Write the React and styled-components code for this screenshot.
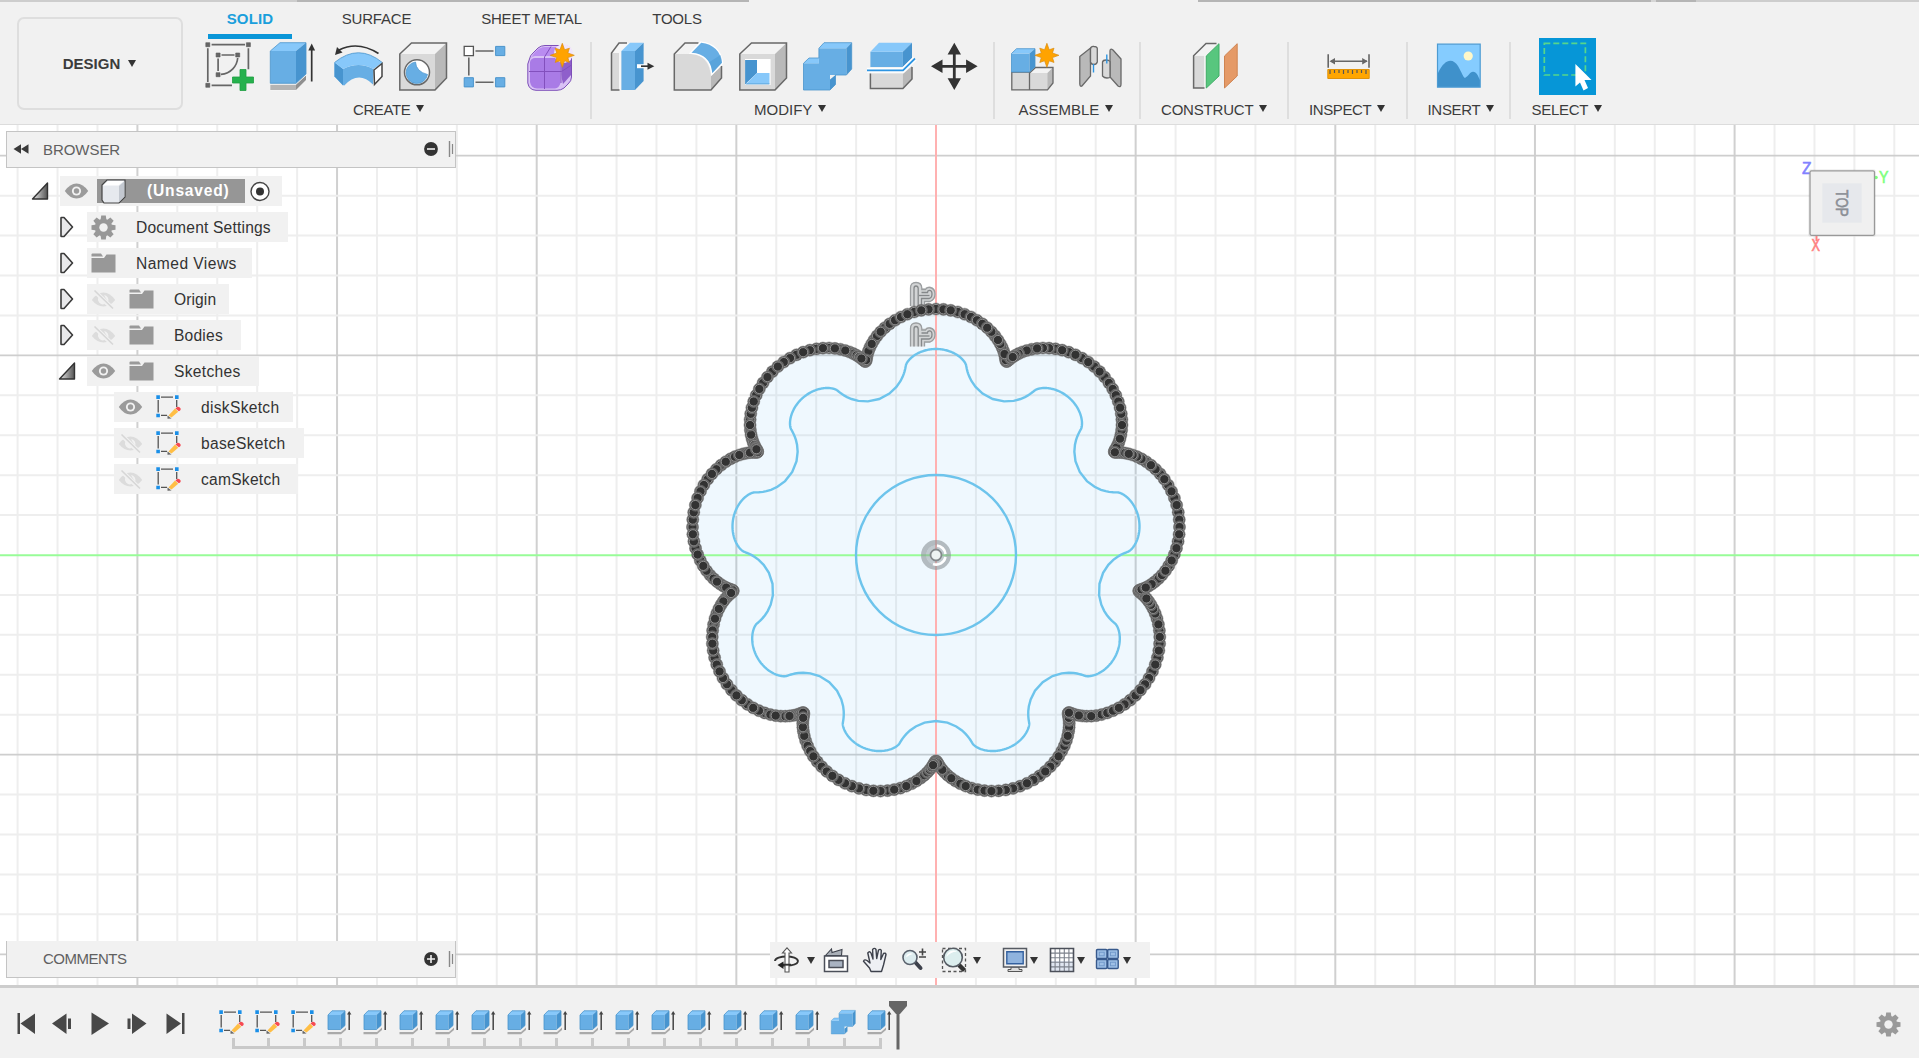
import React from "react";
import styled, { createGlobalStyle } from "styled-components";

const GlobalStyle = createGlobalStyle`
  html, body { margin: 0; padding: 0; }
  body { background: #f1f1f1; overflow: hidden; font-family: "Liberation Sans", Arial, sans-serif; color: #3c3c3c; }
  svg { display: block; flex: none; overflow: visible; }
`;

/* ---------- layout ---------- */

const Window = styled.div`
  width: 1919px;
  height: 1058px;
  display: flex;
  flex-direction: column;
  background: #f1f1f1;
`;

const TitleEdge = styled.div`
  height: 2px;
  flex: none;
  display: flex;
`;

const EdgePiece = styled.div`
  width: ${(p) => p.$width}px;
  background: ${(p) => p.$color};
`;

const Toolbar = styled.header`
  height: 123px;
  flex: none;
  display: flex;
  box-sizing: border-box;
  border-bottom: 1px solid #dcdcdc;
`;

const Workspace = styled.button`
  box-sizing: border-box;
  width: 166px;
  height: 93px;
  margin: 15px 8px 0 17px;
  padding: 0 1px 0 0;
  display: flex;
  align-items: center;
  justify-content: center;
  gap: 8px;
  background: #f1f1f1;
  border: 2px solid #dedede;
  border-radius: 7px;
  color: #3c3c3c;
  font: bold 15px "Liberation Sans", Arial, sans-serif;
`;

const Ribbon = styled.div`
  flex: 1;
  display: flex;
  flex-direction: column;
`;

const Tabs = styled.nav`
  display: flex;
  height: 37px;
  padding-left: 17px;
  box-sizing: border-box;
`;

const Tab = styled.div`
  box-sizing: border-box;
  width: ${(p) => p.$width}px;
  margin-right: ${(p) => p.$after}px;
  padding-top: 8px;
  height: 37px;
  text-align: center;
  white-space: nowrap;
  font-size: 15px;
  line-height: 18px;
  letter-spacing: ${(p) => (p.$active ? 0.15 : -0.2)}px;
  font-weight: ${(p) => (p.$active ? "bold" : "normal")};
  color: ${(p) => (p.$active ? "#1a9fdc" : "#3c3c3c")};
  border-bottom: ${(p) => (p.$active ? "5px solid #0a96d8" : "none")};
`;

const Groups = styled.div`
  display: flex;
  padding-top: 3px;
`;

const GroupBox = styled.section`
  box-sizing: border-box;
  width: ${(p) => p.$width}px;
  height: 77px;
  display: flex;
  flex-direction: column;
  border-right: ${(p) => (p.$last ? "none" : "2px solid #dedede")};
`;

const Tools = styled.div`
  display: flex;
  height: 48px;
  gap: ${(p) => p.$gap ?? 16.3}px;
  padding-left: ${(p) => p.$start}px;
`;

const GroupLabel = styled.div`
  display: flex;
  align-items: center;
  gap: 5.5px;
  margin-top: 11px;
  padding-left: ${(p) => p.$start}px;
  font-size: 15px;
  line-height: 18px;
  letter-spacing: ${(p) => p.$spacing ?? -0.4}px;
  color: #3c3c3c;
  white-space: nowrap;
`;

const SelectTile = styled.div`
  width: 57px;
  height: 57px;
  margin-top: -4px;
  background: #0696d7;
`;

const Caret = styled.span`
  width: 0;
  height: 0;
  flex: none;
  border-left: 4.5px solid transparent;
  border-right: 4.5px solid transparent;
  border-top: 7px solid #333;
  margin-top: ${(p) => p.$drop ?? -3}px;
`;

const Canvas = styled.main`
  position: relative;
  flex: 1;
  min-height: 0;
  background: #fff;
  overflow: hidden;
`;

const Drawing = styled.svg`
  position: absolute;
  inset: 0;
  width: 1919px;
  height: 860px;
`;

const Overlay = styled.div`
  position: absolute;
  inset: 0;
  display: flex;
  flex-direction: column;
  justify-content: space-between;
  padding: 6px 0 7px 6px;
`;

const PanelHead = styled.div`
  box-sizing: border-box;
  width: 450px;
  height: 37px;
  display: flex;
  align-items: center;
  padding: 0 2px 1px 6px;
  background: #f1f1f1;
  border: 1px solid #c4c4c4;
  border-top-width: ${(p) => (p.$open ? 0 : 1)}px;
`;

const PanelTitle = styled.span`
  flex: 1;
  margin-left: ${(p) => p.$indent}px;
  font-size: 15px;
  letter-spacing: ${(p) => p.$spacing}px;
  color: #606060;
`;

const Bottom = styled.div`
  display: flex;
  align-items: flex-end;
`;

const NavBar = styled.div`
  width: 376px;
  height: 36px;
  margin-left: 314px;
  padding-left: 4px;
  display: flex;
  align-items: center;
  background: #f1f1f1;
`;

const NavItem = styled.div`
  display: flex;
  align-items: center;
  gap: ${(p) => p.$gap ?? 6}px;
  width: ${(p) => p.$width}px;
`;

const Tree = styled.div`
  margin-top: 8px;
`;

const Row = styled.div`
  height: 36px;
  display: flex;
  align-items: flex-start;
  padding-left: ${(p) => 25 + p.$level * 27}px;
`;

const Twisty = styled.div`
  width: 29px;
  height: 30px;
  display: flex;
  align-items: center;
`;

const RowBody = styled.div`
  box-sizing: border-box;
  width: ${(p) => p.$width}px;
  height: 30px;
  padding-left: 4px;
  display: flex;
  align-items: center;
  gap: 13px;
  background: #f1f1f1;
`;

const RowText = styled.span`
  margin: 1px 0 0 7px;
  font-size: 15.6px;
  letter-spacing: ${(p) => p.$spacing ?? 0.2}px;
  line-height: 20px;
  color: #333;
  white-space: nowrap;
`;

const Selected = styled.div`
  width: 148px;
  height: 24px;
  margin-left: -5px;
  padding-left: 4px;
  box-sizing: border-box;
  display: flex;
  align-items: center;
  gap: 21px;
  background: #969696;
  color: #fff;
  font-size: 15.6px;
  font-weight: bold;
  letter-spacing: 0.8px;
`;

const RadioWrap = styled.div`
  margin-left: -8px;
`;

const Timeline = styled.footer`
  box-sizing: border-box;
  height: 73px;
  flex: none;
  display: flex;
  border-top: 3px solid #cdcdcd;
`;

const Transport = styled.div`
  display: flex;
  gap: 17.5px;
  padding: 24px 0 0 14.5px;
`;

const History = styled.div`
  display: flex;
  margin-left: 34px;
  padding-top: 22px;
`;

const Feature = styled.div`
  width: 36px;
  height: 39px;
  display: flex;
  flex-direction: column;
  justify-content: space-between;
`;

const Joint = styled.div`
  box-sizing: border-box;
  width: ${(p) => (p.$last ? 15 : p.$first ? 23 : 36)}px;
  margin-left: ${(p) => (p.$first ? 13 : 0)}px;
  height: 11px;
  border-bottom: 3px solid #c9c9c9;
  display: flex;
  justify-content: ${(p) => (p.$first ? "flex-start" : p.$last ? "flex-end" : "center")};
`;

const Tick = styled.div`
  width: 3px;
  height: 8px;
  margin-left: ${(p) => (p.$mid ? -8 : 0)}px;
  background: #c9c9c9;
`;

const Marker = styled.div`
  margin: 13px 0 0 -15px;
`;

const Settings = styled.div`
  margin: 24px 18.5px 0 auto;
`;

/* ---------- ribbon icons ---------- */

const B = { top: "#87c8fa", front: "#67aee4", side: "#4794cf" };
const G = { top: "#f3f3f3", front: "#d9d9d9", side: "#b9b9b9", line: "#686868" };

const Ico = ({ children, w = 48, h = 48, box, ...r }) => (
  <svg width={w} height={h} viewBox={box || `0 0 ${w} ${h}`} fill="none" {...r}>
    {children}
  </svg>
);

const Star = ({ x, y, r = 12 }) => {
  const pts = Array.from({ length: 16 }, (_, i) => {
    const a = (i * Math.PI) / 8 - Math.PI / 2;
    const q = i % 2 ? r * 0.5 : i % 4 === 0 ? r : r * 0.84;
    return `${x + q * Math.cos(a)},${y + q * Math.sin(a)}`;
  }).join(" ");
  return <polygon points={pts} fill="#ffa300" stroke="#d98b10" strokeWidth=".7" />;
};

const SketchIcon = () => (
  <Ico>
    <path d="M5.6 2.7H39M1.8 6.3V40M42.4 6.3V27.3M5.6 43.3H26M15.5 13H28.5M12.1 16.5V29M31.7 16C31 24 25 31.5 15 32.4" stroke="#666" strokeWidth="1.7" />
    <path d="M-.2.7h4v4h-4zM40.4.7h4v4h-4zM-.2 41.3h4v4h-4zM10.1 11h4v4h-4zM29.7 11h4v4h-4zM10.1 30.7h4v4h-4z" fill="#666" stroke="#5a5a5a" strokeWidth=".6" />
    <path d="M34 27.5h6V35h7.5v6H40v7.5h-6V41h-7.500v-6H34z" fill="#25b14d" stroke="#1f9e43" strokeWidth=".8" />
  </Ico>
);

const ExtrudeIcon = () => (
  <Ico>
    <path d="M.3 42.500H26L36 32.500V38L26 48.300H.3z" fill="#fff" />
    <path d="M.3 42.800H26V48H.3z" fill="#b4b4b4" />
    <path d="M26 42.800 36 33.500V38L26 48z" fill="#8f8f8f" />
    <path d="M.3 9H26V41.300H.3z" fill={B.front} />
    <path d="M.3 9 10 .7H36L26 9z" fill={B.top} />
    <path d="M26 9 36 .7V32L26 41.300z" fill={B.side} />
    <path d="M.3 9 10 .7H36V32L26 41.300H.3z" stroke="#4a94cc" strokeWidth=".8" />
    <path d="M41.700 39.500V6" stroke="#333" strokeWidth="1.700" />
    <path d="M38.300 8.500 41.700 1.500l3.400 7z" fill="#333" />
  </Ico>
);

const RevolveIcon = () => (
  <Ico>
    <path d="M.5 20.500 9 27Q24.500 19 39.500 27L39 42.500Q24.500 28 10 43.800L.5 34.500z" fill={B.front} />
    <path d="M.5 20.500 9 27V43.500L.5 34.500z" fill={B.side} />
    <path d="M.5 20.500Q24.500 1 48.300 20.500L39.500 27Q24.500 19 9 27z" fill={B.top} />
    <path d="M.5 20.500Q24.500 1 48.300 20.500" stroke="#4a94cc" strokeWidth=".8" />
    <path d="M40 28 48 21.500V34.500L40.500 42.500z" fill="#fff" stroke="#444" strokeWidth="1.500" />
    <path d="M44.500 11.500Q24-1.500 5 8" stroke="#333" strokeWidth="1.700" />
    <path d="M1 13 3 5l5.500 5.500z" fill="#333" />
  </Ico>
);

const GreyBox = () => (
  <>
    <path d="M.8 12H36V48H.8z" fill={G.front} />
    <path d="M.8 12 12.500 1H47.500L36 12z" fill={G.top} />
    <path d="M36 12 47.500 1V36L36 48z" fill={G.side} />
    <path d="M.8 12 12.500 1H47.500V36L36 48H.8z" stroke={G.line} strokeWidth="1.500" />
  </>
);

const HoleIcon = () => (
  <Ico>
    <GreyBox />
    <circle cx="18" cy="30.300" r="12.500" fill="#fff" stroke={G.line} strokeWidth="1.500" />
    <path d="M16.500 20Q17 29.500 28.500 32.500A10.800 10.800 0 1 1 16.500 20z" fill={B.front} stroke="#4a94cc" strokeWidth=".7" />
  </Ico>
);

const PatternIcon = () => (
  <Ico>
    <path d="M12.500 9H30.500M5.800 15.500V33.500M12.500 40.300H30.500" stroke="#666" strokeWidth="1.600" />
    <path d="M1.200 4.400h9.200v9.200H1.200z" fill="#fff" stroke="#555" strokeWidth="1.300" />
    <path d="M32.600 4.400h9.200v9.200h-9.200zM1.200 35.700h9.200v9.200H1.200zM32.600 35.700h9.200v9.200h-9.200z" fill={B.front} stroke="#4a94cc" strokeWidth="1" />
  </Ico>
);

const FormIcon = () => (
  <Ico>
    <path d="M2.500 17Q3 13.500 6 11L11 6Q14 3.500 18 3.500H38Q44 4 44.500 10V35Q44.500 39 41 42L37 46Q34 48.300 30 48.300H9Q2 48 .8 41V22z" fill="#d9c2f5" stroke="#7d4fb8" strokeWidth="1" />
    <path d="M3 17 8 10Q13 5 18 5H34L28 14H8Q5 14 3 17z" fill="#b98cf0" />
    <path d="M34.500 22 44 18V33L36 42Q34.500 36 34.500 32z" fill="#8f5fcb" />
    <path d="M3 28V20Q4 16 8 16H29Q33 17 33.500 21V41Q32 46 28 46.500H10Q4 46 3 40z" fill="#a97be6" />
    <path d="M17.500 15V47M2 29.500H34.500L44.500 23M17.500 15 24 4.500M34 20V41" stroke="#8250bd" strokeWidth="1" />
    <circle cx="36.500" cy="11.500" r="9.500" fill="#f1e6fb" />
    <Star x={35.300} y={13.300} />
  </Ico>
);

const PressPullIcon = () => (
  <Ico>
    <path d="M.5 11 8 1H19L10 10V48H.5z" fill="#f7f7f7" />
    <path d="M.5 11H8V48H.5z" fill={G.front} />
    <path d="M8.500 48H.5V11L8 1H16" stroke={G.line} strokeWidth="1.500" />
    <path d="M10.400 9H24V48H10.400z" fill={B.front} />
    <path d="M10.400 9 19 .7H32.600L24 9z" fill={B.top} />
    <path d="M24 9 32.600.7V39L24 48z" fill={B.side} />
    <path d="M26 24.200H40" stroke="#fff" strokeWidth="4" />
    <path d="M30 24.200H38" stroke="#333" strokeWidth="1.700" />
    <path d="M36.500 20.700 43.300 24.200l-6.800 3.500z" fill="#333" />
  </Ico>
);

const FilletIcon = () => (
  <Ico box="1.5 0 48 48">
    <path d="M.8 12 11.500 1H26L17.500 11.500z" fill={G.top} />
    <path d="M.8 12H17Q36 13 37.500 35V48H.8z" fill={G.front} />
    <path d="M37.500 34 48 24V36L37.500 48z" fill={G.side} />
    <path d="M25 1H11.500L.8 12V48H37.500L48 36V24" stroke={G.line} strokeWidth="1.500" />
    <path d="M18 10.700 27.700.7Q46 3 48.400 20.700L38.800 31Q37 12 18 10.700z" fill={B.front} stroke="#fff" strokeWidth="2.600" />
    <path d="M18 10.700 27.700.7Q46 3 48.400 20.700L38.800 31Q37 12 18 10.700z" fill={B.front} />
    <path d="M47 13Q48.200 16 48.400 20.700L38.800 31Q38.500 25 36 20z" fill="#509cd6" opacity=".6" />
  </Ico>
);

const ShellIcon = () => (
  <Ico>
    <GreyBox />
    <path d="M6 17H31.600V43H6z" fill="#fff" />
    <path d="M6.500 18H18V31L6.500 42z" fill={B.side} />
    <path d="M7 42 18 31H30.500V42z" fill={B.top} />
    <path d="M6.500 18V42H30.500" stroke="#4a94cc" strokeWidth=".8" />
  </Ico>
);

const CombineShape = () => (
  <>
    <path d="M15.900 6.300H43.400V33H27V48H.5V21.300H15.900z" fill={B.front} />
    <path d="M15.900 6.300 21 .7H48.700L43.400 6.300zM.5 21.300 6 16h9.900v5.300z" fill={B.top} />
    <path d="M43.400 6.300 48.700.7V27L43.400 33zM27 37.500 32.500 33V42.500L27 48z" fill={B.side} />
    <path d="M.5 21.300 6 16h9.900V6.300L21 .7H48.700V27L43.400 33H32.500V42.500L27 48H.5z" stroke="#4a94cc" strokeWidth=".8" />
  </>
);

const CombineIcon = () => (
  <Ico>
    <CombineShape />
  </Ico>
);

const SplitIcon = () => (
  <Ico>
    <path d="M3.400 9.700H35.900V25H3.400z" fill={B.front} />
    <path d="M3.400 9.700 12 .7H45L35.900 9.700z" fill={B.top} />
    <path d="M35.900 9.700 45 .7V16L35.900 25z" fill={B.side} />
    <path d="M3.400 31.500H35.900V46.500H3.400z" fill={G.front} />
    <path d="M35.900 32 45 24V37L35.900 46.500z" fill={G.side} />
    <path d="M3.400 31.500V46.500H35.900L45 37V25" stroke={G.line} strokeWidth="1.500" />
    <path d="M0 28.300H36L48 16.500" stroke="#fff" strokeWidth="5" />
    <path d="M0 28.300H36L48 16.500" stroke="#2e95e2" strokeWidth="1.800" />
  </Ico>
);

const MoveIcon = () => (
  <Ico>
    <path d="M23.300 9V40M8 24.300H39" stroke="#333" strokeWidth="2.800" />
    <path d="M23.300.7 30 12.500H16.600zM23.300 48l6.700-11.800H16.600zM0 24.300l11.500-6.800v13.600zM46.600 24.300l-11.500-6.800v13.600z" fill="#333" />
  </Ico>
);

const ComponentIcon = () => (
  <Ico>
    <path d="M19 31 24.500 25.500H42V41L36.500 48H.8V30H19z" fill={G.front} />
    <path d="M19 31 24.500 25.500H42L36.500 31z" fill={G.top} />
    <path d="M36.500 31 42 25.500V41L36.500 48z" fill={G.side} />
    <path d="M.8 30V47.800H36.500L42 41V25.500H24.500L18.500 31V47.800M.8 30H18.500" stroke={G.line} strokeWidth="1.300" />
    <path d="M.5 11.500H18.500V30H.5z" fill={B.front} />
    <path d="M.5 11.500 5.500 6.700H24L18.500 11.500z" fill={B.top} />
    <path d="M18.500 11.500 24 6.700V25L18.500 30z" fill={B.side} />
    <path d="M.5 11.500 5.500 6.700H24V25L18.500 30H.5z" stroke="#4a94cc" strokeWidth=".8" />
    <circle cx="35.900" cy="13.300" r="10" fill="#f1f1f1" opacity=".6" />
    <Star x={35.900} y={13.300} />
  </Ico>
);

const JointIcon = () => (
  <Ico>
    <path d="M.8 14.500 11.500 6V34L3 44Q1 45 .8 42z" fill={G.side} stroke={G.line} strokeWidth="1.300" />
    <path d="M11.500 7Q12 4 15 4.500Q18 4.500 18.300 6.500V20Q17.500 22.500 15 22.500Q12 22.500 11.500 20z" fill={G.front} stroke={G.line} strokeWidth="1.300" />
    <path d="M42 17 34 8Q31 6 31 9V35L39 44Q42 46 42 42z" fill={G.side} stroke={G.line} strokeWidth="1.300" />
    <path d="M23.500 20Q24 18 27 18Q30 18 31 19.500V35.500Q26 37 23.500 34z" fill={G.front} stroke={G.line} strokeWidth="1.300" />
    <path d="M14.500 22V30.500M27.800 12.500V21.500" stroke="#2e95e2" strokeWidth="1.400" />
  </Ico>
);

const PlaneIcon = () => (
  <Ico>
    <path d="M1.600 13.700H12V46H1.600z" fill={G.front} />
    <path d="M1.600 13.700 14 1.500H26L13 13.700z" fill={G.top} />
    <path d="M12.500 46H1.600V13.700L14 1.500H24.500" stroke={G.line} strokeWidth="1.500" />
    <path d="M14.300 14 27 1.700V34L14.300 46z" fill="#58c67e" stroke="#3fae66" strokeWidth="1" />
    <path d="M32.500 14 45.200 1.700V34L32.500 46z" fill="#e59a67" stroke="#cf8452" strokeWidth="1" />
  </Ico>
);

const MeasureIcon = () => (
  <Ico>
    <path d="M3.200 12.300V25.700M44 12.300V25.700M6 19.300H42" stroke="#666" strokeWidth="1.600" />
    <path d="M4.500 19.300 10 16v6.600zM42.700 19.300 37.200 16v6.600z" fill="#666" />
    <path d="M2.800 27.500H44.200V36.500H2.800z" fill="#ffa600" stroke="#e0930a" strokeWidth="1" />
    <path d="M5 28v4M9.500 28v3M14 28v3M18.500 28v4M23 28v3M27.500 28v4M32 28v3M36.500 28v3M41 28v4" stroke="#555" strokeWidth="1.200" />
  </Ico>
);

const ImageIcon = () => (
  <Ico>
    <path d="M2.500 2.200H45.200V45.200H2.500z" fill="#85ccff" />
    <path d="M3 45V31C10 16 18 16 23 24C27 31 28 35 30 36C34 34 35 29 39 30C42 30.500 43 34 45 38V45z" fill="#3f91cb" />
    <circle cx="33.200" cy="14" r="4.600" fill="#fff8c9" />
    <path d="M2.500 2.200H45.200V45.200H2.500z" stroke="#4d9bd2" strokeWidth="1.200" />
  </Ico>
);

const SelectIcon = () => (
  <Ico w={57} h={57}>
    <path d="M5.300 5.300H46.400V37H5.300z" stroke="#56d68b" strokeWidth="1.700" strokeDasharray="6 3" />
    <path d="M36.400 26 52.500 42H45.500L49 50 44.500 52.500 41 44.500 36.400 48.500z" fill="#fff" />
  </Ico>
);

/* ---------- tree icons ---------- */

const Eye = () => (
  <Ico w={25} h={20}>
    <path d="M.8 10Q6 2.500 12.500 2.500T24.200 10Q19 17.500 12.500 17.500T.8 10z" fill="#9b9b9b" />
    <circle cx="12.500" cy="10" r="4.600" fill="#f1f1f1" />
    <circle cx="12.500" cy="10" r="2.700" fill="#9b9b9b" />
  </Ico>
);

const EyeOff = () => (
  <Ico w={25} h={20}>
    <path d="M.8 11Q6 3.500 12.500 3.500T24.200 11Q19 17.500 12.500 17.500T.8 11z" fill="#dcdcdc" />
    <path d="M8 7.500A5 5 0 0 0 14 15z" fill="#f1f1f1" />
    <path d="M13 6a5 5 0 0 1 4 7z" fill="#f1f1f1" />
    <path d="M3 1.500 22 20" stroke="#f1f1f1" strokeWidth="4.500" />
    <path d="M3.500 1.500 22 19.500" stroke="#d6d6d6" strokeWidth="1.600" />
  </Ico>
);

const Folder = () => (
  <Ico w={25} h={20}>
    <path d="M.5 1.500Q.5.500 1.500.500H10L12 3.500H.500z" fill="#9a9a9a" />
    <path d="M.5 5H13L15.500 1.500H24.500V19.500H.500z" fill="#989898" />
  </Ico>
);

const Gear = ({ color = "#989898", hole = "#f1f1f1" }) => (
  <Ico w={25} h={25} box="-12.5 -12.5 25 25">
    {Array.from({ length: 8 }, (_, i) => (
      <path key={i} d="M-2.300-12H2.300L3-7H-3z" fill={color} transform={`rotate(${i * 45})`} />
    ))}
    <circle r="8.700" fill={color} />
    <circle r="4.200" fill={hole} />
  </Ico>
);

const MiniSketch = () => (
  <Ico w={25} h={25}>
    <path d="M5 2.200H17M2.200 5V17.500M20.700 5V12M5 20.300H11" stroke="#555" strokeWidth="1.300" />
    <path d="M.3.3h3.600v3.600H.3zM19 .3h3.600v3.600H19zM.3 18.700h3.600v3.600H.3z" fill="#1a8fe8" />
    <path d="M12.500 20.500 19 13.500 22.200 16.800 15.500 22.500z" fill="#ffbe45" />
    <path d="M19.500 13.500Q21.500 10.500 23.800 12.500T22.800 16.300z" fill="#f74a52" />
    <path d="M11.500 20.500 15.500 23.500 11.500 23.800z" fill="#666" />
  </Ico>
);

const Cube = () => (
  <Ico w={25} h={25}>
    <path d="M1 6 6 1H24V18L18 24H3L1 21z" fill="#e6e9ee" stroke="#444" strokeWidth="1.200" />
    <path d="M2 6.500 7 2H23L17.500 6.500z" fill="#fff" />
    <path d="M18 7 23.300 2.500V17.500L18 23z" fill="#c3c8d0" />
  </Ico>
);

const Open = () => (
  <Ico w={19} h={20}>
    <defs>
      <linearGradient id="tw" x1="0" x2="1" y1="0" y2="0">
        <stop offset="0.200" stopColor="#ccc" />
        <stop offset="1" stopColor="#555" />
      </linearGradient>
    </defs>
    <path d="M16.500 2V18H1.500z" fill="url(#tw)" stroke="#333" strokeWidth="1.400" strokeLinejoin="round" />
  </Ico>
);

const Closed = () => (
  <Ico w={18} h={22}>
    <path d="M3.500 1.500H6L14.500 11 6 20.500H3.500Q3 20.500 3 20V2Q3 1.500 3.500 1.500z" fill="#e8e8ea" stroke="#3a3a3a" strokeWidth="1.600" strokeLinejoin="round" />
  </Ico>
);

const Radio = () => (
  <Ico w={20} h={20}>
    <circle cx="10" cy="10.500" r="9" fill="#fff" stroke="#444" strokeWidth="1.400" />
    <circle cx="10" cy="10.500" r="4" fill="#333" />
  </Ico>
);

const Collapse = () => (
  <Ico w={16} h={10}>
    <path d="M8 .3V9.700L.5 5zM15.500.3V9.700L8 5z" fill="#3a3a3a" />
  </Ico>
);

const Disc = ({ plus }) => (
  <Ico w={14} h={14}>
    <circle cx="7" cy="7" r="6.900" fill="#333" />
    <path d={plus ? "M3 7H11M7 3V11" : "M3 7H11"} stroke="#f1f1f1" strokeWidth="1.600" />
  </Ico>
);

const Grip = () => (
  <Ico w={15} h={18}>
    <path d="M11.500 1V17" stroke="#888" strokeWidth="1.400" />
    <path d="M14.500 4V14" stroke="#888" strokeWidth="1.200" />
  </Ico>
);

/* ---------- navigation icons ---------- */

const ink = "#3d414b";

const Orbit = () => (
  <Ico w={26} h={26}>
    <path d="M24 14.500C24 11 18 9.500 12.500 9.500S1 11 1 14M24 14.500C23 18 17 19 8 18.500" stroke="#333" strokeWidth="1.900" />
    <path d="M11 25V6H8.500L13 .8 17.500 6H15V25z" fill="#fff" stroke="#555" strokeWidth="1.100" />
    <path d="M9 17.700H17" stroke="#333" strokeWidth="1.900" />
    <path d="M3.500 18 9.500 14.500V22z" fill="#222" />
  </Ico>
);

const LookAt = () => (
  <Ico w={26} h={26}>
    <path d="M2.500 8.500 8.500 2 9 5.500 19 2.500 18.500 8.500z" fill="#aab0b8" stroke={ink} strokeWidth="1.100" />
    <path d="M1.500 9H24.500V24.500H1.500z" fill="#fff" stroke="#4b4f59" strokeWidth="1.500" />
    <path d="M6 13.500H20V20.500H6z" fill="#a9b3c2" stroke="#4b4f59" strokeWidth="1.500" />
  </Ico>
);

const Hand = () => (
  <Ico w={26} h={26}>
    <path
      d="M9 24.500 7.500 21 1.500 14.200Q2.500 12 5 13.500L8 16 5.800 6Q7.500 3.500 9 6L11 12 10.600 2.500Q12.500.3 14 2.500L14.700 11.500 16.500 3Q18.500 1.500 19.300 3.500L18.800 12.500 21.500 6.500Q23.500 5.500 24 7.500L21.500 18 19.500 24.500z"
      fill="#eef0f4"
      stroke={ink}
      strokeWidth="1.400"
      strokeLinejoin="round"
    />
  </Ico>
);

const Zoom = () => (
  <Ico w={26} h={26}>
    <path d="M13.500 15.500 18.500 21" stroke={ink} strokeWidth="4" strokeLinecap="round" />
    <circle cx="8" cy="10.500" r="7" fill="#dcecef" stroke="#59616c" strokeWidth="1.600" />
    <path d="M4 10.500A4.500 4.500 0 0 1 11 7Q7 7.500 4 10.500z" fill="#fff" />
    <path d="M17 5H24M20.500 1.500V8.500M17 10H24" stroke="#444" strokeWidth="1.600" />
  </Ico>
);

const ZoomWindow = () => (
  <Ico w={26} h={26}>
    <path d="M1.500 1.500H24.500V24.500H1.500z" stroke="#555" strokeWidth="1.300" strokeDasharray="3 2.500" />
    <path d="M18 18 23.500 23.500" stroke="#333" strokeWidth="4.500" />
    <circle cx="12" cy="10.500" r="9.300" fill="#dceeee" stroke="#555b63" strokeWidth="1.600" />
    <path d="M5.500 10A7 7 0 0 1 16 4.500Q9 5 5.500 10z" fill="#fff" />
  </Ico>
);

const Monitor = () => (
  <Ico w={26} h={26}>
    <path d="M9 20H17V22.500H20V24.500H6V22.500H9z" fill="#ddd" stroke="#555" strokeWidth="1" />
    <path d="M1.500 1.500H24.500V20H1.500z" fill="#efefef" stroke="#555a62" strokeWidth="1.500" />
    <path d="M4.800 4.800H21.200V16.800H4.800z" fill="#8fb3de" stroke="#33609f" strokeWidth="1.400" />
  </Ico>
);

const GridIcon = () => (
  <Ico w={26} h={26}>
    <path d="M1.500 1.500H24.500V24.500H1.500z" fill="#fff" />
    <path d="M1.500 14H24.500V24.500H1.500z" fill="#dfe5f0" />
    <path d="M6.100 1.500V24.500M10.700 1.500V24.500M15.300 1.500V24.500M19.900 1.500V24.500M1.500 6.100H24.500M1.500 10.700H24.500M1.500 15.300H24.500M1.500 19.900H24.500" stroke="#7d828c" strokeWidth="1.100" />
    <path d="M1.500 1.500H24.500V24.500H1.500z" stroke="#4b4f59" strokeWidth="1.600" />
  </Ico>
);

const Views = () => (
  <Ico w={26} h={26}>
    {[[1.500, 2.500], [12.700, 2.500], [1.500, 12.500], [12.700, 12.500]].map(([x, y]) => (
      <g key={`${x}-${y}`}>
        <rect x={x} y={y} width="10.500" height="9" rx="1" fill="#9fc0e6" stroke="#37598c" strokeWidth="1.400" />
        <rect x={x + 2.800} y={y + 2.700} width="4.900" height="3.600" stroke="#6f97c9" strokeWidth=".9" />
      </g>
    ))}
  </Ico>
);

/* ---------- timeline icons ---------- */

const MiniExtrude = () => (
  <Ico w={25} h={25}>
    <path d="M.5 22H14L19 17.500V20L14 24.300H.500z" fill="#aaa" />
    <path d="M1 5H13.500V19.500H1z" fill={B.front} />
    <path d="M1 5 5 .8H18L13.500 5z" fill={B.top} />
    <path d="M13.500 5 18 .8V15.500L13.500 19.500z" fill={B.side} />
    <path d="M1 5 5 .8H18V15.500L13.500 19.500H1z" stroke="#4a94cc" strokeWidth=".8" />
    <path d="M22.200 20V3" stroke="#444" strokeWidth="1.500" />
    <path d="M20 4.500 22.200 1 24.400 4.500z" fill="#444" />
  </Ico>
);

const MiniCombine = () => (
  <Ico w={25} h={25} box="0 0 50 50">
    <CombineShape />
  </Ico>
);

const transport = [
  "M2.500 1H5V22H2.500zM20 1.500V22L5.500 11.500z",
  "M0 11.500 14.500 1.500V22zM16 6.500H19V17H16z",
  "M1.500.5 19 11.500 1.500 23z",
  "M.5 6.500H3.500V17H.5zM5 1.500 19.500 11.500 5 22z",
  "M1.500 1.500 16 11.500 1.500 22zM17 1H19.500V22H17z",
];

/* ---------- sketch geometry ---------- */

const CX = 936;
const CY = 555;
const RING = 226;
const ECC = 20;
const ROLLER = 40;
const UNIT = 39.93;

const trochoid = (deg, offset = 0) => {
  const t = (deg * Math.PI) / 180;
  const x = RING * Math.sin(t) + ECC * Math.sin(10 * t);
  const y = RING * Math.cos(t) + ECC * Math.cos(10 * t);
  const dx = RING * Math.cos(t) + 10 * ECC * Math.cos(10 * t);
  const dy = -RING * Math.sin(t) - 10 * ECC * Math.sin(10 * t);
  const len = Math.hypot(dx, dy);
  return [CX + x + (offset * dy) / len, CY - (y - (offset * dx) / len)];
};

const outline = (offset, steps = 1440) =>
  "M" +
  Array.from({ length: steps }, (_, i) =>
    trochoid((i * 360) / steps, offset).map((v) => v.toFixed(2)).join(" ")
  ).join("L") +
  "Z";

const lines = (origin, from, to) => {
  const out = [];
  for (let i = Math.ceil((from - origin) / UNIT); origin + i * UNIT < to; i++) {
    if (i !== 0) out.push({ at: origin + i * UNIT, major: i % 5 === 0 });
  }
  return out;
};

const points = Array.from({ length: 360 }, (_, i) => ({
  rank: (i * 7919 + ((i * i * 31) % 97) * 53) % 361,
  at: trochoid(i),
})).sort((a, b) => a.rank - b.rank);

const TangentMark = ({ y }) => (
  <g transform={`translate(909 ${y})`} fill="none">
    <path d="M1 25V7Q1 1 7 1Q12.500 1 13 7H16Q18 5 21 5.500Q26.500 7 26.500 13T21 21H15V25z" fill="#d2d4d5" />
    <path d="M1.500 25V7Q1.500 1.500 7 1.500T12.800 7V8.500H16.500Q18 6 21 6.500Q26 7.500 26 13T21 20.500H15.500V25" stroke="#9b9ea0" strokeWidth="1.300" />
    <path d="M5 25V7.500Q5 5 7 5T9.200 7.500V25M12.500 25V17.500H20Q23 17 23 13T20 9.500Q18.500 9.500 18.500 11.500H12.500" stroke="#85888a" strokeWidth="1.300" />
    <path d="M10 14.500H20.500" stroke="#85888a" strokeWidth="1.300" />
  </g>
);

const Sketch = () => (
  <Drawing viewBox="0 125 1919 860">
    {lines(CX, 0, 1919).map(({ at, major }) => (
      <path key={`v${at}`} d={`M${at} 124V985`} stroke={major ? "#d0d0d0" : "#eeeeee"} strokeWidth="2" />
    ))}
    {lines(CY, 124, 985).map(({ at, major }) => (
      <path key={`h${at}`} d={`M0 ${at}H1919`} stroke={major ? "#cecece" : "#eeeeee"} strokeWidth={major ? 1.800 : 2} />
    ))}
    <path d={outline(0)} fill="#50b4f0" fillOpacity=".09" />
    <path d={`M0 ${CY + 0.3}H1919`} stroke="#98fc98" strokeWidth="2" />
    <path d={`M${CX} 124V985`} stroke="#ffb1b1" strokeWidth="2" />
    <path d={outline(ROLLER)} fill="none" stroke="#6dc4ec" strokeWidth="2.400" />
    <circle cx={CX} cy={CY} r="80" fill="none" stroke="#6dc4ec" strokeWidth="2.400" />
    <TangentMark y={281} />
    {points.map(({ at: [x, y] }, i) => (
      <g key={i}>
        <circle cx={x} cy={y} r="6.100" fill="#5e5e5e" stroke="#7c7c7c" strokeWidth=".5" />
        <circle cx={x} cy={y} r="4.600" fill="#323232" stroke="#929292" strokeWidth="1" />
      </g>
    ))}
    <TangentMark y={321.500} />
    <circle cx={CX} cy={CY} r="12.400" fill="none" stroke="#8a9296" strokeOpacity=".6" strokeWidth="5.200" />
    <circle cx={CX} cy={CY} r="8" fill="none" stroke="#8a9296" strokeOpacity=".45" strokeWidth="3.600" />
    <path d={`M${CX + 1} ${CY - 9.500}A9.500 9.500 0 0 1 ${CX + 9.500} ${CY - 1}M${CX + 9.500} ${CY + 2}A9.500 9.500 0 0 1 ${CX - 3} ${CY + 9}`} fill="none" stroke="#fff" strokeWidth="2.600" />
    <circle cx={CX} cy={CY} r="5.500" fill="#eef3f3" stroke="#84898c" strokeWidth="1.800" />

    <rect x="1808" y="169" width="68" height="68" rx="3" fill="#000" opacity=".05" />
    <text x="1802" y="174" fill="#8282ff" stroke="#8282ff" strokeWidth=".6" fontSize="17" fontFamily="Liberation Sans, sans-serif" textLength="9.500" lengthAdjust="spacingAndGlyphs">Z</text>
    <text x="1879" y="183" fill="#7dff7d" fontSize="16.500" fontFamily="Liberation Sans, sans-serif" stroke="#7dff7d" strokeWidth=".6" textLength="9.500" lengthAdjust="spacingAndGlyphs">Y</text>
    <circle cx="1876" cy="177.500" r="1.800" fill="#7dff7d" />
    <text x="1811.500" y="251" fill="#ff8080" fontSize="17" fontFamily="Liberation Sans, sans-serif" stroke="#ff8080" strokeWidth=".6" textLength="8.500" lengthAdjust="spacingAndGlyphs">X</text>
    <path d="M1816.500 236V241" stroke="#ff8080" strokeWidth="2" />
    <rect x="1810" y="170.800" width="64.500" height="64.500" rx="1.500" fill="#f0f0f0" stroke="#999" strokeWidth="1.300" />
    <rect x="1822.300" y="183.300" width="39.400" height="39.400" fill="#e6e8ec" />
    <text transform="translate(1836 203.200) rotate(90)" textAnchor="middle" fill="#8b8f96" stroke="#8b8f96" strokeWidth=".6" fontSize="16.500" fontFamily="Liberation Sans, sans-serif" textLength="27" lengthAdjust="spacingAndGlyphs">TOP</text>
  </Drawing>
);

/* ---------- data ---------- */

const groups = [
  { name: "CREATE", width: 401, tools: 14.800, label: 162, icons: [SketchIcon, ExtrudeIcon, RevolveIcon, HoleIcon, PatternIcon, FormIcon] },
  { name: "MODIFY", width: 403, tools: 18.500, label: 162, spacing: 0, toolGap: 16.200, icons: [PressPullIcon, FilletIcon, ShellIcon, CombineIcon, SplitIcon, MoveIcon] },
  { name: "ASSEMBLE", width: 146, tools: 16, label: 23.500, spacing: 0, gap: 20, icons: [ComponentIcon, JointIcon] },
  { name: "CONSTRUCT", width: 148, tools: 51, label: 20, spacing: -0.200, icons: [PlaneIcon] },
  { name: "INSPECT", width: 118.500, tools: 35.500, label: 20, icons: [MeasureIcon] },
  { name: "INSERT", width: 103, tools: 27, label: 20, spacing: -0.300, icons: [ImageIcon] },
  { name: "SELECT", width: 112, tools: 28, label: 21, spacing: -0.300, icons: [] },
];

const rows = [
  { text: "Document Settings", level: 1, width: 201, icons: [Gear], spacing: 0.18 },
  { text: "Named Views", level: 1, width: 165, icons: [Folder], spacing: 0.45 },
  { text: "Origin", level: 1, width: 142, icons: [EyeOff, Folder], spacing: 0.1 },
  { text: "Bodies", level: 1, width: 154, icons: [EyeOff, Folder], spacing: 0.2 },
  { text: "Sketches", level: 1, width: 172, icons: [Eye, Folder], open: true, spacing: 0.3 },
  { text: "diskSketch", level: 2, width: 179, icons: [Eye, MiniSketch], leaf: true, spacing: 0.3 },
  { text: "baseSketch", level: 2, width: 190, icons: [EyeOff, MiniSketch], leaf: true, spacing: 0.3 },
  { text: "camSketch", level: 2, width: 184, icons: [EyeOff, MiniSketch], leaf: true, spacing: 0.25 },
];

const features = [
  ...Array(3).fill(MiniSketch),
  ...Array(14).fill(MiniExtrude),
  MiniCombine,
  MiniExtrude,
];

export default function App() {
  return (
    <Window>
      <GlobalStyle />
      <TitleEdge>
        <EdgePiece $width={297} $color="#cdcdcd" />
        <EdgePiece $width={452} $color="#b5b5b5" />
        <EdgePiece $width={449} $color="#f1f1f1" />
        <EdgePiece $width={453} $color="#b5b5b5" />
        <EdgePiece $width={5} $color="#d5d5d5" />
        <EdgePiece $width={40} $color="#b5b5b5" />
        <EdgePiece $width={223} $color="#cdcdcd" />
      </TitleEdge>
      <Toolbar>
        <Workspace>
          DESIGN <Caret $drop={-1} />
        </Workspace>
        <Ribbon>
          <Tabs>
            <Tab $active $width={84} $after={42}>SOLID</Tab>
            <Tab $width={85} $after={52}>SURFACE</Tab>
            <Tab $width={121} $after={42}>SHEET METAL</Tab>
            <Tab $width={86} $after={0}>TOOLS</Tab>
          </Tabs>
          <Groups>
            {groups.map((g, i) => (
              <GroupBox key={g.name} $width={g.width} $last={i === groups.length - 1}>
                <Tools $start={g.tools} $gap={g.gap ?? g.toolGap}>
                  {g.icons.map((Icon, k) => (
                    <Icon key={k} />
                  ))}
                  {g.name === "SELECT" && (
                    <SelectTile>
                      <SelectIcon />
                    </SelectTile>
                  )}
                </Tools>
                <GroupLabel $start={g.label} $spacing={g.spacing}>
                  {g.name}
                  <Caret />
                </GroupLabel>
              </GroupBox>
            ))}
          </Groups>
        </Ribbon>
      </Toolbar>

      <Canvas>
        <Sketch />
        <Overlay>
          <div>
            <PanelHead>
              <Collapse />
              <PanelTitle $indent={14} $spacing={-0.05}>BROWSER</PanelTitle>
              <Disc />
              <Grip />
            </PanelHead>
            <Tree>
              <Row $level={0}>
                <Twisty>
                  <Open />
                </Twisty>
                <RowBody $width={222}>
                  <Eye />
                  <Selected>
                    <Cube />
                    (Unsaved)
                  </Selected>
                  <RadioWrap>
                    <Radio />
                  </RadioWrap>
                </RowBody>
              </Row>
              {rows.map((r) => (
                <Row key={r.text} $level={r.level}>
                  <Twisty>{!r.leaf && (r.open ? <Open /> : <Closed />)}</Twisty>
                  <RowBody $width={r.width}>
                    {r.icons.map((Icon, k) => (
                      <Icon key={k} />
                    ))}
                    <RowText $spacing={r.spacing}>{r.text}</RowText>
                  </RowBody>
                </Row>
              ))}
            </Tree>
          </div>
          <Bottom>
            <PanelHead $open>
              <PanelTitle $indent={30} $spacing={-0.5}>COMMENTS</PanelTitle>
              <Disc plus />
              <Grip />
            </PanelHead>
            <NavBar>
              <NavItem $width={48.500} $gap={7}><Orbit /><Caret $drop={0} /></NavItem>
              <NavItem $width={39.500}><LookAt /></NavItem>
              <NavItem $width={39.500}><Hand /></NavItem>
              <NavItem $width={39}><Zoom /></NavItem>
              <NavItem $width={61.500}><ZoomWindow /><Caret $drop={0} /></NavItem>
              <NavItem $width={46.500} $gap={2}><Monitor /><Caret $drop={0} /></NavItem>
              <NavItem $width={46} $gap={2}><GridIcon /><Caret $drop={0} /></NavItem>
              <NavItem $width={46} $gap={2}><Views /><Caret $drop={0} /></NavItem>
            </NavBar>
          </Bottom>
        </Overlay>
      </Canvas>

      <Timeline>
        <Transport>
          {transport.map((d) => (
            <Ico key={d} w={20} h={24}>
              <path d={d} fill="#484848" />
            </Ico>
          ))}
        </Transport>
        <History>
          {features.map((Icon, i) => {
            const first = i === 0;
            const last = i === features.length - 1;
            return (
              <Feature key={i}>
                <Icon />
                <Joint $first={first} $last={last}>
                  <Tick $mid={!first && !last} />
                </Joint>
              </Feature>
            );
          })}
        </History>
        <Marker>
          <Ico w={20} h={49}>
            <path d="M1 0H19V5L12 13H11.500V48.500H8.500V13H8L1 5z" fill="#666" />
          </Ico>
        </Marker>
        <Settings>
          <Gear color="#9a9a9a" />
        </Settings>
      </Timeline>
    </Window>
  );
}
